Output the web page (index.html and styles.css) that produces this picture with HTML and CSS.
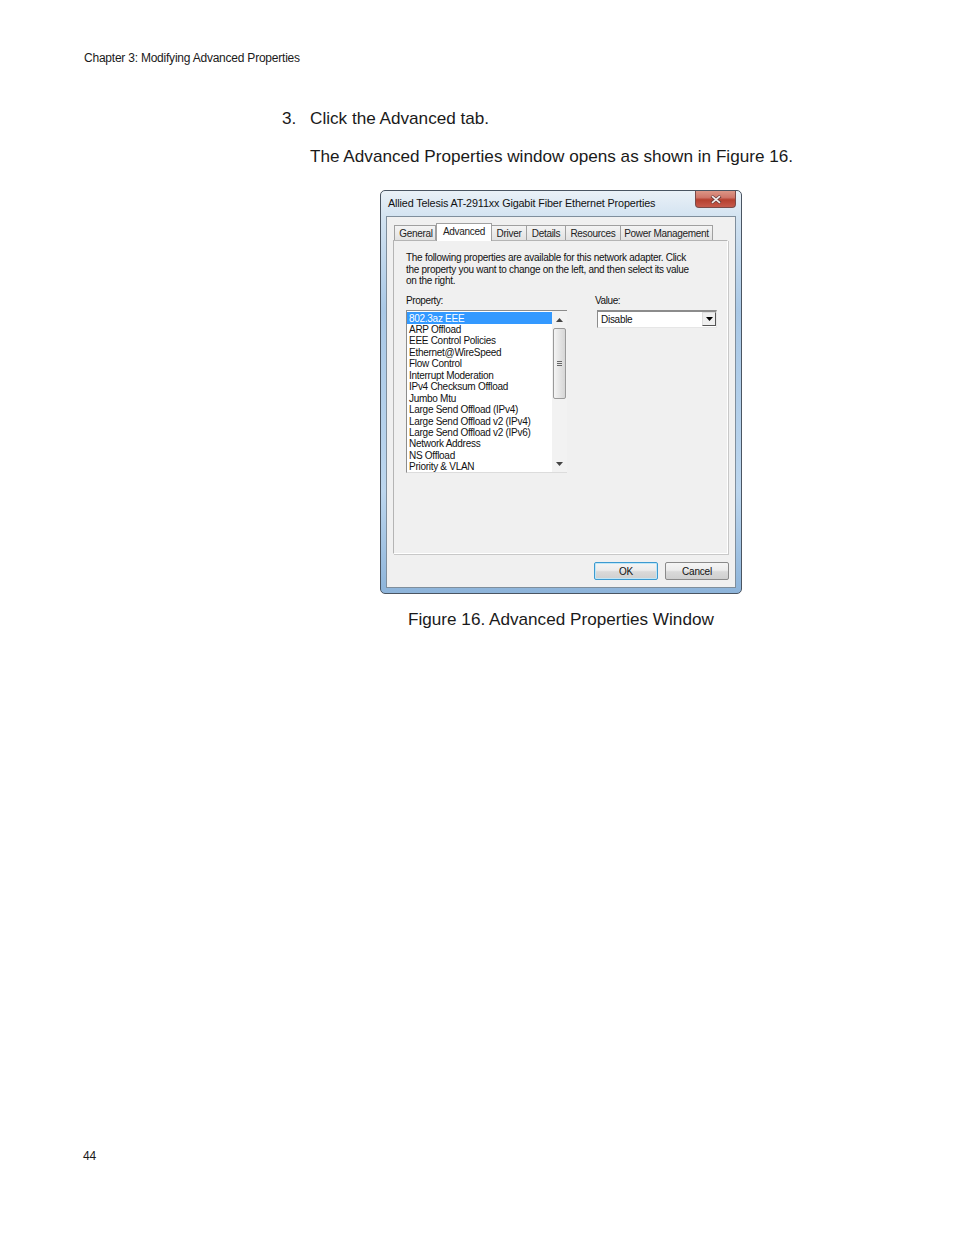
FILE: index.html
```html
<!DOCTYPE html>
<html lang="en">
<head>
    <meta charset="UTF-8">
    <meta name="viewport" content="width=device-width, initial-scale=1.0">
    <title>Chapter 3: Modifying Advanced Properties</title>
    <link rel="stylesheet" href="styles.css">
</head>
<body>
    <div class="page">
        <div class="running-head">Chapter 3: Modifying Advanced Properties</div>
        <div class="step">
            <span class="step-num">3.</span>
            <span>Click the Advanced tab.</span>
        </div>
        <p class="step-text">The Advanced Properties window opens as shown in Figure 16.</p>

        <div class="window">
            <div class="titlebar">
                <span class="title">Allied Telesis AT-2911xx Gigabit Fiber Ethernet Properties</span>
                <div class="close-btn">
                    <svg width="12" height="9" viewBox="0 0 12 9">
                        <path d="M1.5 1 L10.5 8 M10.5 1 L1.5 8" stroke="#6b3a38" stroke-width="3.2" fill="none"/>
                        <path d="M2 1.2 L10 7.8 M10 1.2 L2 7.8" stroke="#f1eeee" stroke-width="1.7" fill="none"/>
                    </svg>
                </div>
            </div>
            <div class="client">
                <div class="tabs">
                    <div class="tab tab-general">General</div>
                    <div class="tab tab-advanced active">Advanced</div>
                    <div class="tab tab-driver">Driver</div>
                    <div class="tab tab-details">Details</div>
                    <div class="tab tab-resources">Resources</div>
                    <div class="tab tab-power">Power Management</div>
                </div>
                <div class="pane">
                    <p class="intro">The following properties are available for this network adapter. Click<br>the property you want to change on the left, and then select its value<br>on the right.</p>
                    <div class="columns">
                        <div class="col-property">
                            <div class="field-label">Property:</div>
                            <div class="listbox">
                                <ul class="items">
                                    <li class="selected">802.3az EEE</li>
                                    <li>ARP Offload</li>
                                    <li>EEE Control Policies</li>
                                    <li>Ethernet@WireSpeed</li>
                                    <li>Flow Control</li>
                                    <li>Interrupt Moderation</li>
                                    <li>IPv4 Checksum Offload</li>
                                    <li>Jumbo Mtu</li>
                                    <li>Large Send Offload (IPv4)</li>
                                    <li>Large Send Offload v2 (IPv4)</li>
                                    <li>Large Send Offload v2 (IPv6)</li>
                                    <li>Network Address</li>
                                    <li>NS Offload</li>
                                    <li>Priority &amp; VLAN</li>
                                </ul>
                                <div class="scrollbar">
                                    <svg class="arrow" width="7" height="4" viewBox="0 0 7 4"><path d="M3.5 0 L7 4 L0 4 Z" fill="#444"/></svg>
                                    <div class="thumb">
                                        <div class="grip"></div>
                                    </div>
                                    <svg class="arrow arrow-down" width="7" height="4" viewBox="0 0 7 4"><path d="M0 0 L7 0 L3.5 4 Z" fill="#444"/></svg>
                                </div>
                            </div>
                        </div>
                        <div class="col-value">
                            <div class="field-label">Value:</div>
                            <div class="combo">
                                <span class="combo-text">Disable</span>
                                <div class="combo-btn">
                                    <svg width="7" height="4" viewBox="0 0 7 4"><path d="M0 0 L7 0 L3.5 4 Z" fill="#000"/></svg>
                                </div>
                            </div>
                        </div>
                    </div>
                </div>
                <div class="actions">
                    <button class="btn btn-default">OK</button>
                    <button class="btn">Cancel</button>
                </div>
            </div>
        </div>

        <div class="caption">Figure 16. Advanced Properties Window</div>
        <div class="page-num">44</div>
    </div>
</body>
</html>
```

FILE: styles.css
```css
html, body {
    margin: 0;
    padding: 0;
    background: #fff;
}
.page {
    width: 954px;
    height: 1235px;
    padding-top: 51px;
    box-sizing: border-box;
    font-family: "Liberation Sans", Arial, sans-serif;
    color: #1a1a1a;
    overflow: hidden;
}
.running-head {
    margin-left: 84px;
    font-size: 12px;
    letter-spacing: -0.225px;
    line-height: 15px;
    height: 15px;
}
.step {
    display: flex;
    margin: 43px 0 0 282px;
    font-size: 17.15px;
    line-height: 19px;
}
.step-num { width: 28px; }
.step-text {
    margin: 19px 0 0 310px;
    font-size: 17.15px;
    line-height: 19px;
}

/* dialog */
.window {
    width: 362px;
    height: 404px;
    margin: 24px 0 0 380px;
    box-sizing: border-box;
    border: 1px solid #4a5562;
    border-radius: 5px;
    padding: 0 5px 5px;
    background: linear-gradient(180deg, #eaf1f7 0, #d3e3f1 26px, #a9c8e6 120px, #bcd6ee 300px, #8db4da 100%);
    display: flex;
    flex-direction: column;
    font-family: "Liberation Sans", Arial, sans-serif;
    color: #111;
}
.titlebar {
    height: 25px;
    flex: none;
    display: flex;
    justify-content: space-between;
    align-items: flex-start;
}
.title {
    font-size: 10.8px;
    letter-spacing: -0.14px;
    line-height: 14px;
    margin: 5px 0 0 2px;
    white-space: nowrap;
}
.close-btn {
    width: 41px;
    height: 17px;
    box-sizing: border-box;
    border: 1px solid #7a4a48;
    border-top: none;
    border-radius: 0 0 4px 4px;
    background: linear-gradient(180deg, #dc9686 0, #d0776a 40%, #b5402f 55%, #c65a4c 100%);
    display: flex;
    align-items: center;
    justify-content: center;
}
.client {
    flex: 1;
    border: 1px solid #7f8e9c;
    background: #f0f0f0;
    display: flex;
    flex-direction: column;
    padding: 0 6px;
}
.tabs {
    display: flex;
    align-items: flex-end;
    height: 23px;
    margin-left: 1px;
    font-size: 10px;
    letter-spacing: -0.3px;
}
.tab {
    height: 15px;
    box-sizing: border-box;
    border: 1px solid #a0a0a0;
    border-bottom: none;
    border-left: none;
    background: linear-gradient(180deg, #f4f4f4, #e2e2e2);
    text-align: center;
    line-height: 15px;
    color: #222;
    white-space: nowrap;
}
.tab-general { width: 42px; border-left: 1px solid #a0a0a0; padding-left: 2px; }
.tab-advanced { width: 56px; }
.tab-driver { width: 35px; }
.tab-details { width: 39px; }
.tab-resources { width: 55px; }
.tab-power { width: 92px; }
.tab.active {
    height: 18px;
    margin-bottom: -1px;
    line-height: 15px;
    background: #fff;
    position: relative;
    z-index: 2;
    border-left: 1px solid #a0a0a0;
}
.pane {
    width: 335px;
    height: 314px;
    box-sizing: border-box;
    border: 1px solid #b4b4b4;
    border-right-color: #fff;
    border-bottom-color: #fff;
    box-shadow: 1px 1px 0 #c8c8c8;
    padding: 11px 12px 0;
    font-size: 10px;
    letter-spacing: -0.28px;
}
.intro {
    margin: 0;
    line-height: 11.5px;
}
.columns {
    display: flex;
    margin-top: 7px;
}
.col-property { width: 189px; flex: none; }
.col-value { flex: none; }
.field-label {
    letter-spacing: -0.4px;
    line-height: 13px;
    height: 16px;
}
.listbox {
    width: 161px;
    height: 163px;
    box-sizing: border-box;
    display: flex;
    border-top: 1px solid #8c8c8c;
    border-left: 1px solid #8c8c8c;
    border-bottom: 1px solid #dcdcdc;
    background: #fff;
    overflow: hidden;
}
.items {
    list-style: none;
    margin: 1px 0 0;
    padding: 0;
    width: 145px;
    flex: none;
    line-height: 11.45px;
}
.items li {
    padding-left: 2px;
    white-space: nowrap;
    color: #111;
}
.items li.selected {
    padding-top: 1px;
    background: #3399ff;
    color: #fff;
}
.scrollbar {
    flex: 1;
    background: #f2f2f2;
    display: flex;
    flex-direction: column;
    align-items: center;
}
.arrow { margin-top: 7px; flex: none; }
.thumb {
    width: 13px;
    height: 71px;
    margin-top: 6px;
    box-sizing: border-box;
    border: 1px solid #9a9a9a;
    border-radius: 2px;
    background: linear-gradient(90deg, #f4f4f4, #d6d6d6);
    display: flex;
    align-items: center;
    justify-content: center;
}
.grip {
    width: 5px;
    height: 5px;
    background: repeating-linear-gradient(180deg, #666 0, #666 1px, #e8e8e8 1px, #e8e8e8 2px);
}
.arrow-down { margin-top: 63px; }
.combo {
    width: 120px;
    height: 18px;
    margin: 0 0 0 2px;
    box-sizing: border-box;
    border-top: 2px solid #8c8c8c;
    border-left: 1px solid #8c8c8c;
    border-right: 1px solid #e6e6e6;
    border-bottom: 1px solid #e6e6e6;
    background: #fff;
    display: flex;
    justify-content: space-between;
    align-items: center;
    padding-left: 3px;
}
.combo-btn {
    width: 14px;
    height: 14px;
    box-sizing: border-box;
    border: 1px solid #555;
    border-top-color: #ddd;
    border-left-color: #ddd;
    background: #efefef;
    display: flex;
    align-items: center;
    justify-content: center;
}
.actions {
    display: flex;
    justify-content: flex-end;
    gap: 7px;
    margin-top: 8px;
}
.btn {
    width: 64px;
    height: 18px;
    padding: 0;
    font-family: inherit;
    font-size: 10px;
    letter-spacing: -0.2px;
    color: #111;
    border: 1px solid #8a8a8a;
    border-radius: 2px;
    background: linear-gradient(180deg, #f5f5f5 0, #ececec 45%, #d9d9d9 55%, #cfcfcf 100%);
}
.btn-default {
    border-color: #3c9ad0;
    box-shadow: inset 0 0 0 1px #bfe6f7;
}

.caption {
    margin: 16px 0 0 408px;
    font-size: 17.15px;
    line-height: 19px;
}
.page-num {
    margin: 520px 0 0 83px;
    font-size: 12px;
    letter-spacing: -0.2px;
    line-height: 15px;
}
```
